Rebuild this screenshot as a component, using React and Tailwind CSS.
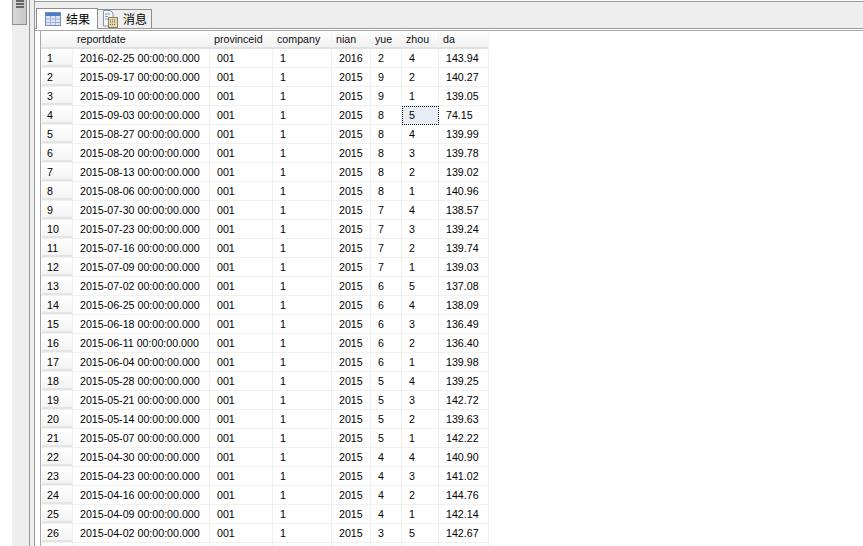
const rows = [
  ["2016-02-25", "2016", 2, 4, "143.94"],
  ["2015-09-17", "2015", 9, 2, "140.27"],
  ["2015-09-10", "2015", 9, 1, "139.05"],
  ["2015-09-03", "2015", 8, 5, "74.15"],
  ["2015-08-27", "2015", 8, 4, "139.99"],
  ["2015-08-20", "2015", 8, 3, "139.78"],
  ["2015-08-13", "2015", 8, 2, "139.02"],
  ["2015-08-06", "2015", 8, 1, "140.96"],
  ["2015-07-30", "2015", 7, 4, "138.57"],
  ["2015-07-23", "2015", 7, 3, "139.24"],
  ["2015-07-16", "2015", 7, 2, "139.74"],
  ["2015-07-09", "2015", 7, 1, "139.03"],
  ["2015-07-02", "2015", 6, 5, "137.08"],
  ["2015-06-25", "2015", 6, 4, "138.09"],
  ["2015-06-18", "2015", 6, 3, "136.49"],
  ["2015-06-11", "2015", 6, 2, "136.40"],
  ["2015-06-04", "2015", 6, 1, "139.98"],
  ["2015-05-28", "2015", 5, 4, "139.25"],
  ["2015-05-21", "2015", 5, 3, "142.72"],
  ["2015-05-14", "2015", 5, 2, "139.63"],
  ["2015-05-07", "2015", 5, 1, "142.22"],
  ["2015-04-30", "2015", 4, 4, "140.90"],
  ["2015-04-23", "2015", 4, 3, "141.02"],
  ["2015-04-16", "2015", 4, 2, "144.76"],
  ["2015-04-09", "2015", 4, 1, "142.14"],
  ["2015-04-02", "2015", 3, 5, "142.67"],
]

const gridCols = "grid grid-cols-[32px_137px_63px_59px_39px_31px_37px_50px]"
const heads = ["", "reportdate", "provinceid", "company", "nian", "yue", "zhou", "da"]

function TableIcon() {
  return (
    <svg width="16" height="14" viewBox="0 0 16 14" className="shrink-0">
      <rect x="0.5" y="0.5" width="15" height="13" fill="#dfe6f2" stroke="#6f8fc0" />
      <rect x="1" y="1" width="14" height="3" fill="#4a7cc8" />
      <path d="M1 7h14M1 10.5h14M5.5 4v9M10.5 4v9" stroke="#9db3d6" fill="none" />
    </svg>
  )
}

function MessageIcon() {
  return (
    <svg width="15" height="18" viewBox="0 0 15 18" className="shrink-0">
      <path d="M0.500 0.500h7l2.500 2.500v13h-9.500z" fill="#f4f6fa" stroke="#8a93a6" />
      <path d="M2 4h5M2 6.500h3M2 9h3" stroke="#7f9cc8" fill="none" />
      <rect x="5.500" y="7.500" width="9" height="10" fill="#e4d6a8" stroke="#8a8468" />
      <path d="M7 10h6M7 12h6M7 14.500h6" stroke="#6d6a58" strokeDasharray="1 1" fill="none" />
    </svg>
  )
}

function Cell({ children, selected = false }) {
  return (
    <div className={`h-[19px] pl-[7px] border-r border-b border-[#f0f0f0] leading-[19px] whitespace-nowrap overflow-hidden ${selected ? "bg-[#e8ecf4] outline-1 outline-dotted -outline-offset-1 outline-black" : ""}`}>
      {children}
    </div>
  )
}

function ResultRow({ n, row }) {
  const [date, nian, yue, zhou, da] = row
  return (
    <div className={gridCols}>
      <div className="h-[19px] border-r border-b border-[#f0f0f0] pl-px">
        <div className="h-[18px] pl-[5px] leading-[19px] bg-gradient-to-b from-[#ffffff] to-[#f4f4f4] border-b-2 border-[#e4e4e4] overflow-hidden">{n}</div>
      </div>
      <Cell>{date} 00:00:00.000</Cell>
      <Cell>001</Cell>
      <Cell>1</Cell>
      <Cell>{nian}</Cell>
      <Cell>{yue}</Cell>
      <Cell selected={n === 4}>{zhou}</Cell>
      <Cell>{da}</Cell>
    </div>
  )
}

export default function App() {
  return (
    <div className="flex w-[863px] h-[546px] overflow-hidden bg-white text-black font-['Liberation_Sans',sans-serif] text-[10.67px]">
      <div className="w-3 shrink-0" />

      {/* outer splitter scrollbar */}
      <div className="w-[17px] shrink-0 bg-[#eeeeee]">
        <div className="w-[15px] h-[25px] bg-gradient-to-r from-[#d8d8d8] to-[#c8c8c8] border-x border-b border-[#8f8f8f] flex flex-col items-center gap-px">
          <div className="w-[8px] h-[2px] bg-[#666]" />
          <div className="w-[8px] h-[2px] bg-[#666]" />
          <div className="w-[8px] h-[2px] bg-[#666]" />
        </div>
      </div>

      <div className="w-[6px] shrink-0 bg-[#eeeeee] border-x border-[#9a9a9a]" />

      <div className="flex-1 flex flex-col min-w-0">
        {/* tab strip */}
        <div className="h-7 shrink-0 mt-px bg-[#eeeeee] border-y border-[#9a9a9a] flex items-end pl-px -mb-px">
          <div className="w-[62px] h-[21px] -mb-px bg-white border-x border-t border-[#8e8e8e] flex items-center gap-[5px] pl-[8px] whitespace-nowrap font-['Noto_Sans_CJK_SC',sans-serif] text-[12px] z-10">
            <TableIcon />
            <span>结果</span>
          </div>
          <div className="w-[54px] h-[19px] bg-[#efefef] border-r border-t border-[#8e8e8e] flex items-center gap-[5px] pl-[5px] whitespace-nowrap font-['Noto_Sans_CJK_SC',sans-serif] text-[12px]">
            <MessageIcon />
            <span>消息</span>
          </div>
        </div>

        {/* results grid */}
        <div className="flex-1 mt-[2px] border-t border-[#a8a8a8] pl-[5px] min-h-0">
          <div className="w-[449px] border-l border-[#a8a8a8] h-full">
            <div className={gridCols}>
              {heads.map((h, i) => (
                <div key={i} className="h-[18px] pl-[4px] leading-[16px] text-[#111] bg-gradient-to-b from-[#ffffff] to-[#f1f1f1] border-r border-b-2 border-r-[#f4f4f4] border-b-[#e2e2e2]">{h}</div>
              ))}
            </div>
            {rows.map((row, i) => (
              <ResultRow key={i} n={i + 1} row={row} />
            ))}
            <div className={gridCols}>
              {heads.map((h, i) => (
                <Cell key={i} />
              ))}
            </div>
          </div>
        </div>
      </div>
    </div>
  )
}
